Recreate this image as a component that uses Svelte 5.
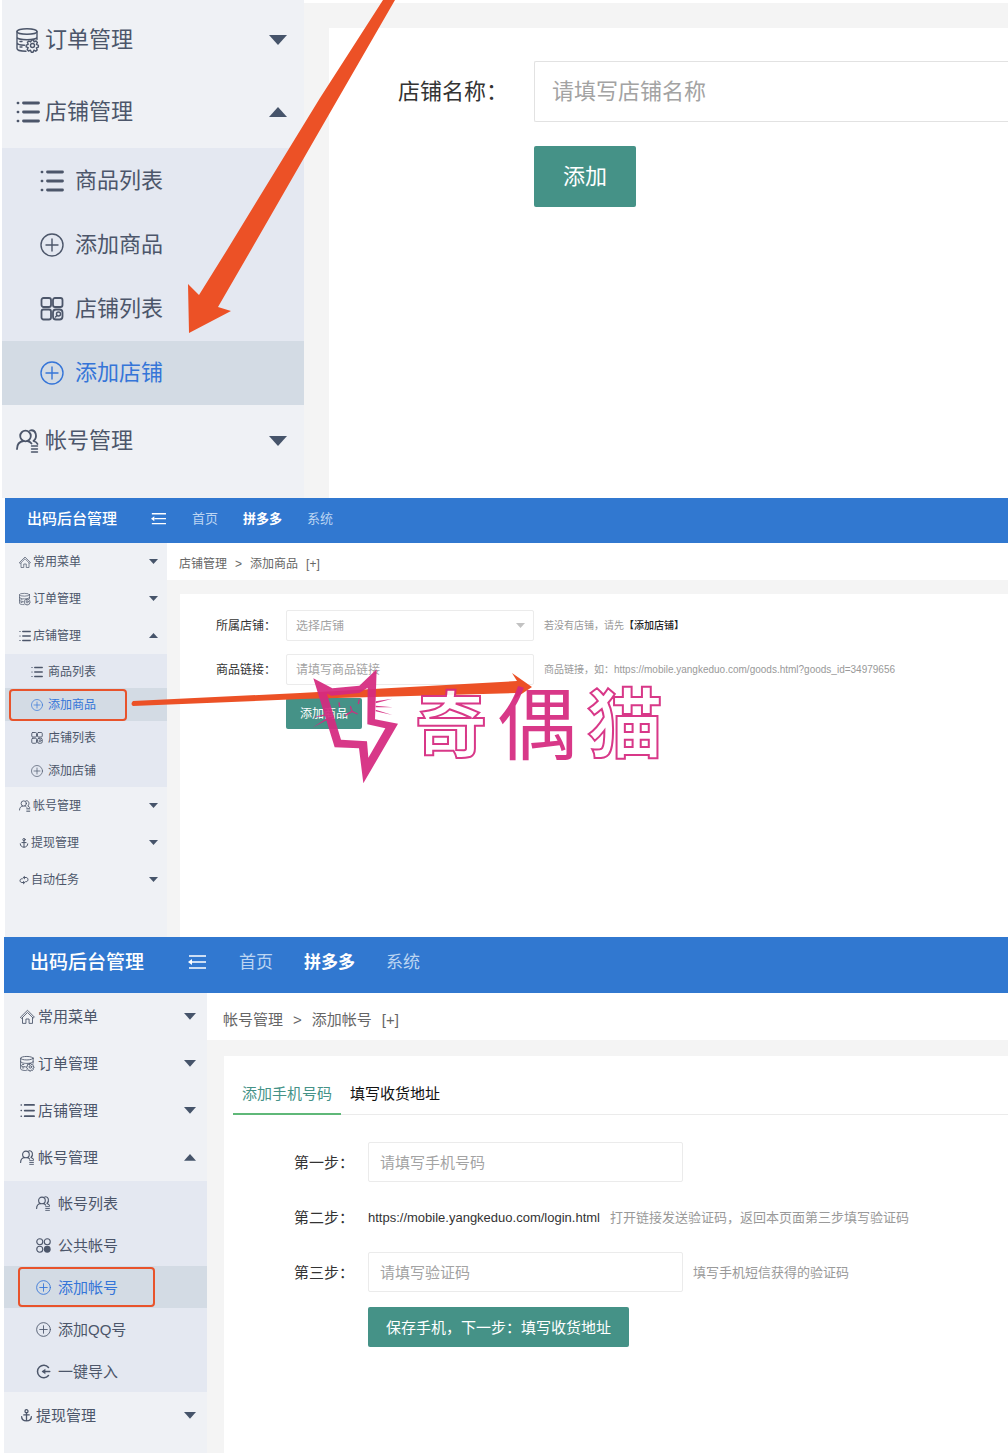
<script>
    const goods = [
        { icon: 'list', text: '商品列表' },
        { icon: 'plus', text: '添加商品' },
        { icon: 'grid', text: '店铺列表' },
        { icon: 'plus', text: '添加店铺' }
    ];

    const shopMenu = [
        { icon: 'data', text: '订单管理' },
        { icon: 'list', text: '店铺管理', active: '添加店铺', children: goods },
        { icon: 'user', text: '帐号管理' }
    ];

    const goodsMenu = [
        { icon: 'home', text: '常用菜单' },
        { icon: 'data', text: '订单管理' },
        { icon: 'list', text: '店铺管理', active: '添加商品', marked: true, children: goods },
        { icon: 'user', text: '帐号管理' },
        { icon: 'anchor', text: '提现管理' },
        { icon: 'loop', text: '自动任务' }
    ];

    const accountMenu = [
        { icon: 'home', text: '常用菜单' },
        { icon: 'data', text: '订单管理' },
        { icon: 'list', text: '店铺管理' },
        {
            icon: 'user',
            text: '帐号管理',
            active: '添加帐号',
            marked: true,
            children: [
                { icon: 'user', text: '帐号列表' },
                { icon: 'dots', text: '公共帐号' },
                { icon: 'plus', text: '添加帐号' },
                { icon: 'plus', text: '添加QQ号' },
                { icon: 'import', text: '一键导入' }
            ]
        },
        { icon: 'anchor', text: '提现管理' }
    ];
</script>

{#snippet icon(name)}
    <svg class="icon {name}" viewBox="0 0 24 24" aria-hidden="true">
        {#if name === 'list'}
            <path class="heavy" d="M7.500 3h15M7.500 12h15M7.500 21h15" />
            <path class="bold" d="M1.800 3h.4M1.800 12h.4M1.800 21h.4" />
        {:else if name === 'plus'}
            <circle cx="12" cy="12" r="11" />
            <path d="M12 6v12M6 12h12" />
        {:else if name === 'grid'}
            <rect class="mid" x="1.500" y="1" width="9.500" height="9" rx="2" />
            <rect class="mid" x="13" y="1" width="9.500" height="9" rx="2" />
            <rect class="mid" x="1.500" y="12.500" width="9.500" height="10" rx="2" />
            <rect class="mid" x="13" y="12.500" width="9.500" height="10" rx="3" />
            <circle cx="18.500" cy="17" r="2" />
            <path d="M15.500 20l1.500-1.500" />
        {:else if name === 'data'}
            <ellipse cx="11" cy="3.500" rx="10" ry="2.800" />
            <path d="M1 3.500v17c0 1.600 4 2.800 9 2.800M21 3.500v8M1 9c0 1.600 4.500 2.800 10 2.800S21 10.600 21 9M1 14.500c0 1.600 3 2.600 7.500 2.800M4 13.500h2M4 19h2" />
            <circle cx="16.500" cy="17.500" r="2" />
            <path d="M15.500 12h2l.5 1.800 2-.8 1.400 1.500-1 1.800 2 1v1.800l-2 .8.8 2-1.500 1.300-1.800-1-.8 2h-1.800l-.8-2-2 .8-1.300-1.500 1-1.800-2-.8v-1.800l2-.8-.8-2 1.500-1.300 1.800 1z" />
        {:else if name === 'user'}
            <circle class="mid" cx="9.500" cy="7" r="5.300" />
            <path class="mid" d="M1 20c0-5 3-7.500 6.500-8M11.500 12c2 .4 3 1.200 4 2.500M14 1.500c6-1.500 8 6.500 3.500 10.500 2 .6 3.500 1.500 4 3" />
            <path d="M15.500 17h6M15.500 20h6M15.500 23h6" />
        {:else if name === 'home'}
            <path d="M1 13L12 2l11 11-2 1.500-9-9-9 9zM4 14v9h5.500v-7h5v7H20v-9" />
        {:else if name === 'dots'}
            <circle class="mid" cx="6" cy="6" r="4.800" />
            <circle class="mid" cx="18" cy="6" r="4.800" />
            <circle class="mid" cx="6" cy="18" r="4.800" />
            <circle class="solid" cx="18" cy="18" r="5.500" />
        {:else if name === 'import'}
            <path class="bold" d="M20 5.500A10 10 0 1 0 20 18.500M22 12H11" />
            <path class="solid" d="M9 12l6-4.500v9z" />
        {:else if name === 'anchor'}
            <circle class="bold" cx="12" cy="4" r="2.800" />
            <path class="bold" d="M12 7V22M7 11h10M3 14c0 5 4 8 9 8s9-3 9-8" />
        {:else if name === 'loop'}
            <path class="bold" d="M11 18H7c-6 0-6-9 0-9h1M13 6h4c6 0 6 10 0 10h-1" />
            <path class="solid" d="M10 13.500l5 4.500-5 4.500zM14 1.500L9 6l5 4.500z" />
        {/if}
    </svg>
{/snippet}

{#snippet caret(up)}
    <svg class="caret" viewBox="0 0 18 10" aria-hidden="true">
        <path d={up ? 'M0 10L9 0l9 10z' : 'M0 0h18L9 10z'} />
    </svg>
{/snippet}

{#snippet sidebar(menu)}
    <nav class="sidebar">
        {#each menu as item}
            <button class="menu-title" type="button" aria-expanded={!!item.children}>
                {@render icon(item.icon)}
                <span>{item.text}</span>
                {@render caret(!!item.children)}
            </button>
            {#if item.children}
                <div class="submenu">
                    {#each item.children as child}
                        <a
                            href="#top"
                            class:active={child.text === item.active}
                            class:marked={item.marked && child.text === item.active}
                        >
                            {@render icon(child.icon)}
                            <span>{child.text}</span>
                        </a>
                    {/each}
                </div>
            {/if}
        {/each}
    </nav>
{/snippet}

{#snippet topbar()}
    <header class="topbar">
        <strong class="brand">出码后台管理</strong>
        <button class="fold" type="button" aria-label="菜单">
            <svg viewBox="0 0 18 16" aria-hidden="true">
                <path d="M1 2h17M4 8h14M1 14h17" />
                <path class="tip" d="M0 8l4-3v6z" />
            </svg>
        </button>
        <nav>
            <a href="#top">首页</a>
            <a href="#top" class="current">拼多多</a>
            <a href="#top">系统</a>
        </nav>
    </header>
{/snippet}

{#snippet crumbs(parent, page)}
    <div class="crumbs">
        <span>{parent}</span>
        <span>&gt;</span>
        <span>{page}</span>
        <span>[+]</span>
    </div>
{/snippet}

<section class="panel shop">
    {@render sidebar(shopMenu)}
    <main>
        <form class="card">
            <div class="row">
                <label for="shop-name">店铺名称：</label>
                <input id="shop-name" type="text" placeholder="请填写店铺名称" />
            </div>
            <div class="row">
                <button class="submit" type="button">添加</button>
            </div>
        </form>
    </main>
    <svg class="arrow" viewBox="0 0 400 340" aria-hidden="true">
        <path d="M383 0h12L320 130 251 250 218 307l13 4-42 22-1-49 11 11 28-45 93-152z" />
    </svg>
</section>

<section class="panel goods">
    {@render topbar()}
    {@render sidebar(goodsMenu)}
    <main>
        {@render crumbs('店铺管理', '添加商品')}
        <form class="card">
            <div class="row">
                <label for="goods-shop">所属店铺：</label>
                <div class="select">
                    <select id="goods-shop">
                        <option>选择店铺</option>
                    </select>
                    {@render caret(false)}
                </div>
                <span class="hint">若没有店铺，请先<a href="#top">【添加店铺】</a></span>
            </div>
            <div class="row">
                <label for="goods-link">商品链接：</label>
                <input id="goods-link" type="text" placeholder="请填写商品链接" />
                <span class="hint">商品链接，如：https://mobile.yangkeduo.com/goods.html?goods_id=34979656</span>
            </div>
            <div class="row">
                <button class="submit" type="button">添加商品</button>
            </div>
        </form>
    </main>
    <svg class="arrow" viewBox="0 0 540 240" aria-hidden="true">
        <path d="M128 203L295 195l217-12-5-8 20 14-18 12 2-6-215 6-168 7q-3-2 0-5z" />
    </svg>
    <div class="watermark">
        <svg viewBox="0 0 300 366" aria-hidden="true">
            <path
                fill-rule="evenodd"
                d="M25 40l57 30 81-8 52-49-5 150 69 13-104 179-13-105-73-3zM66 86l42 138 78 5 4 49 51-88-54-12 1-110-25 16-84 8z"
            />
            <path d="M212 109l50-8-50 14zM212 122l52 5-52 0zM212 134l50 16-50-11zM24 157l42-11v6zM22 188l44-29v6z" />
            <path class="face" d="M102 112l2 14M163 103l-3 14M136 124l5 15-20 12M141 139l17 8" />
        </svg>
        <span class="hollow small">奇</span>
        <span>偶</span>
        <span class="hollow">猫</span>
    </div>
</section>

<section class="panel account">
    {@render topbar()}
    {@render sidebar(accountMenu)}
    <main>
        {@render crumbs('帐号管理', '添加帐号')}
        <form class="card">
            <div class="tabs" role="tablist">
                <button type="button" role="tab" aria-selected="true">添加手机号码</button>
                <button type="button" role="tab" aria-selected="false">填写收货地址</button>
            </div>
            <div class="row">
                <label for="phone">第一步：</label>
                <input id="phone" type="text" placeholder="请填写手机号码" />
            </div>
            <div class="row">
                <span class="label">第二步：</span>
                <a class="login" href="#top">https://mobile.yangkeduo.com/login.html</a>
                <span class="hint">打开链接发送验证码，返回本页面第三步填写验证码</span>
            </div>
            <div class="row">
                <label for="code">第三步：</label>
                <input id="code" type="text" placeholder="请填写验证码" />
                <span class="hint">填写手机短信获得的验证码</span>
            </div>
            <div class="row">
                <button class="submit" type="button">保存手机，下一步：填写收货地址</button>
            </div>
        </form>
    </main>
</section>

<style>
    :global(body) {
        background: #fff;
        font-family: 'Liberation Sans', 'Noto Sans CJK SC', sans-serif;
        overflow-x: hidden;
    }

    button,
    input,
    select {
        box-sizing: border-box;
        margin: 0;
        font: inherit;
    }

    button {
        border: 0;
        padding: 0;
        background: none;
        cursor: pointer;
    }

    a {
        color: inherit;
        text-decoration: none;
    }

    .panel {
        position: relative;
        display: grid;
        grid-template-columns: var(--side) minmax(0, 1fr);
        grid-template-rows: auto 1fr;
        font-size: var(--font);
        line-height: 1;
    }

    .shop {
        --font: 22px;
        --side: 302px;
        --icon: 24px;
        --gap: 5px;
        --pad: 14px;
        --row: 72px;
        --sub-row: 64px;
        --sub-pad: 38px;
        --sub-gap: 11px;
        --caret: 18px;
        --caret-pad: 17px;
        --field: 61px;
        --field-pad: 17px;
        --field-gap: 24px;
        --label: 136px;
        grid-template-rows: 1fr;
        min-height: 498px;
        margin-left: 2px;
    }

    .goods {
        --font: 12px;
        --side: 162px;
        --icon: 12px;
        --small-icon: 10px;
        --gap: 2px;
        --pad: 14px;
        --row: 37px;
        --sub-row: 33px;
        --sub-pad: 26px;
        --sub-gap: 5px;
        --caret: 9px;
        --caret-pad: 9px;
        --field: 31px;
        --field-pad: 9px;
        --field-gap: 13px;
        --label: 70px;
        --hint: 10px;
        --bar: 45px;
        min-height: 439px;
        margin-left: 5px;
    }

    .account {
        --font: 15px;
        --side: 203px;
        --icon: 15px;
        --small-icon: 13px;
        --gap: 3px;
        --pad: 16px;
        --row: 47px;
        --sub-row: 42px;
        --sub-pad: 32px;
        --sub-gap: 7px;
        --caret: 12px;
        --caret-pad: 11px;
        --field: 40px;
        --field-pad: 11px;
        --field-gap: 15px;
        --label: 74px;
        --hint: 13px;
        --bar: 56px;
        min-height: 516px;
        margin-left: 4px;
    }

    /* top bar */
    .topbar {
        grid-column: 1 / -1;
        display: flex;
        align-items: center;
        box-sizing: border-box;
        height: var(--bar);
        padding: 0 22px 4px;
        background: #3178d0;
        color: #fff;
    }

    .brand {
        font-size: 15px;
        font-weight: 500;
    }

    .fold {
        width: 15px;
        margin: 0 26px 0 34px;
    }

    .fold svg {
        display: block;
        fill: none;
        stroke: #fff;
        stroke-width: 1.7;
    }

    .fold .tip {
        fill: #fff;
        stroke: none;
    }

    .topbar nav {
        display: flex;
        gap: 25px;
        font-size: 13px;
        color: #bcd5f2;
    }

    .topbar .current {
        color: #fff;
        font-weight: 700;
    }

    .account .topbar {
        padding: 0 26px 6px;
    }

    .account .brand {
        font-size: 19px;
    }

    .account .fold {
        width: 18px;
        margin: 0 33px 0 44px;
    }

    .account .topbar nav {
        gap: 31px;
        font-size: 17px;
    }

    /* sidebar */
    .sidebar {
        background: #eff1f5;
        color: #4c566a;
    }

    .shop .sidebar {
        padding-top: 4px;
    }

    .menu-title {
        display: flex;
        align-items: center;
        gap: var(--gap);
        width: 100%;
        height: var(--row);
        padding: 0 var(--caret-pad) 0 var(--pad);
        color: inherit;
        line-height: 1;
    }

    .submenu {
        padding-top: 1px;
        background: #e4e8f1;
    }

    .submenu a {
        position: relative;
        display: flex;
        align-items: center;
        gap: var(--sub-gap);
        height: var(--sub-row);
        padding-left: var(--sub-pad);
    }

    .submenu .active {
        background: #d3dbe4;
        color: #3575d8;
    }

    .marked::after {
        content: '';
        position: absolute;
        inset: 1px 40px 0 4px;
        border: 2px solid #e8532b;
        border-radius: 4px;
    }

    .account .marked::after {
        inset: 1px 52px 1px 14px;
    }

    .icon {
        flex: none;
        width: var(--icon);
        height: var(--icon);
        fill: none;
        stroke: currentColor;
        stroke-width: 1.4;
        stroke-linecap: round;
        stroke-linejoin: round;
        overflow: visible;
    }

    .anchor,
    .loop {
        width: var(--small-icon);
    }

    .icon .mid {
        stroke-width: 1.8;
    }

    .icon .bold {
        stroke-width: 2.4;
    }

    .icon .heavy {
        stroke-width: 2.8;
    }

    .icon .solid {
        fill: currentColor;
        stroke: none;
    }

    .caret {
        flex: none;
        width: var(--caret);
        margin-left: auto;
        fill: #46546a;
    }

    /* content */
    main {
        display: flex;
        flex-direction: column;
        background: #f4f4f4;
    }

    .shop main {
        border-top: 3px solid #fff;
    }

    .crumbs {
        display: flex;
        align-items: center;
        gap: 8px;
        height: 37px;
        padding: 5px 0 0 12px;
        box-sizing: border-box;
        background: #fff;
        color: #666;
    }

    .account .crumbs {
        gap: 10px;
        height: 47px;
        padding: 5px 0 0 16px;
    }

    .card {
        flex: 1;
        display: flex;
        flex-direction: column;
        gap: var(--field-gap);
        background: #fff;
    }

    .shop .card {
        margin: 25px 0 0 25px;
        padding: 33px 0 0 69px;
    }

    .goods .card {
        margin: 14px 0 0 13px;
        padding: 16px 0 0 36px;
    }

    .account .card {
        margin: 16px 0 0 17px;
    }

    .row {
        display: flex;
        align-items: center;
        height: var(--field);
        color: #333;
    }

    .account .row {
        padding-left: 70px;
    }

    label,
    .label {
        flex: none;
        width: var(--label);
    }

    .submit {
        height: var(--field);
        margin-left: var(--label);
        padding: 0 14px;
        border-radius: 2px;
        background: #459287;
        color: #fff;
    }

    .shop .submit {
        padding: 0 29px;
    }

    .account .submit {
        padding: 0 18px;
    }

    input,
    select {
        width: 248px;
        height: var(--field);
        padding: 0 var(--field-pad);
        border: 1px solid #ebebeb;
        border-radius: 2px;
        outline: 0;
        background: #fff;
        color: #a3a3a3;
    }

    input::placeholder {
        color: #a3a3a3;
    }

    .shop input {
        flex: 1;
        min-width: 0;
        border-color: #e2e2e2;
        border-right: 0;
        border-radius: 2px 0 0 2px;
    }

    .account input {
        width: 315px;
    }

    .select {
        position: relative;
    }

    select {
        appearance: none;
    }

    .select .caret {
        position: absolute;
        top: 13px;
        right: 9px;
        fill: #c2c2c2;
        pointer-events: none;
    }

    .hint {
        margin-left: 10px;
        font-size: var(--hint);
        color: #999;
        white-space: nowrap;
    }

    .hint a {
        color: #222;
        font-weight: 500;
    }

    .login {
        font-size: 13px;
    }

    .tabs {
        display: flex;
        margin: 17px 0 12px 9px;
        border-bottom: 1px solid #ebebeb;
    }

    .tabs button {
        height: 42px;
        margin-bottom: -1px;
        padding: 0 9px;
        border-bottom: 2px solid transparent;
        color: #111;
    }

    .tabs [aria-selected='true'] {
        border-color: #5fb878;
        color: #459287;
    }

    /* drawn over the panels */
    .arrow {
        position: absolute;
        top: 0;
        left: -2px;
        width: 400px;
        fill: #ec5126;
        pointer-events: none;
    }

    .goods .arrow {
        left: 0;
        width: 540px;
    }

    .watermark {
        position: absolute;
        top: 167px;
        left: 300px;
        display: flex;
        align-items: center;
        gap: 10px;
        color: #d62a80;
        font-size: 80px;
        opacity: 0.93;
        pointer-events: none;
    }

    .watermark svg {
        width: 100px;
        fill: currentColor;
    }

    .watermark .face {
        fill: none;
        stroke: currentColor;
        stroke-width: 4;
    }

    .hollow {
        color: #fff;
        font-size: 76px;
        font-weight: 700;
        -webkit-text-stroke: 2px #d62a80;
    }

    .small {
        font-size: 72px;
    }
</style>
